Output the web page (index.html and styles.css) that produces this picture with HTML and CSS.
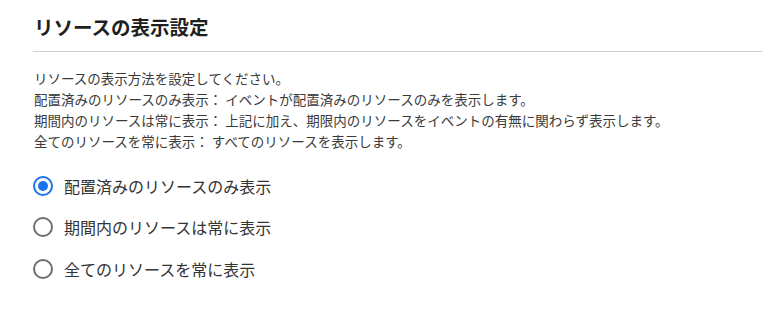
FILE: index.html
```html
<!DOCTYPE html>
<html lang="ja">
<head>
<meta charset="utf-8">
<link rel="stylesheet" href="styles.css">
</head>
<body>
<div class="panel">
  <h2 class="title">リソースの表示設定</h2>
  <div class="desc">
    <p>リソースの表示方法を設定してください。</p>
    <p>配置済みのリソースのみ表示： イベントが配置済みのリソースのみを表示します。</p>
    <p>期間内のリソースは常に表示： 上記に加え、期限内のリソースをイベントの有無に関わらず表示します。</p>
    <p>全てのリソースを常に表示： すべてのリソースを表示します。</p>
  </div>
  <div class="options">
    <label class="option"><input type="radio" name="mode" class="radio" checked><span>配置済みのリソースのみ表示</span></label>
    <label class="option"><input type="radio" name="mode" class="radio"><span>期間内のリソースは常に表示</span></label>
    <label class="option"><input type="radio" name="mode" class="radio"><span>全てのリソースを常に表示</span></label>
  </div>
</div>
</body>
</html>
```
FILE: styles.css
```css
html, body {
  margin: 0;
  padding: 0;
  background: #fff;
}
body {
  font-family: "Noto Sans CJK JP", "Noto Sans", sans-serif;
  color: #333;
}
.panel {
  padding: 12px 0 0 34px;
}
.title {
  margin: 0;
  font-size: 19.5px;
  font-weight: 700;
  line-height: 30px;
  color: #1f1f1f;
  padding-bottom: 9px;
  border-bottom: 1px solid #cfcfcf;
  margin-left: -1px;
  padding-left: 1px;
}
.desc {
  margin-top: 16px;
  font-size: 13.5px;
  line-height: 21px;
  color: #3a3a3a;
}
.desc p {
  margin: 0;
}
.options {
  margin-top: 13px;
  display: flex;
  flex-direction: column;
}
.option {
  display: flex;
  align-items: center;
  height: 41.5px;
  font-size: 16px;
  color: #333;
}
.radio {
  appearance: none;
  -webkit-appearance: none;
  margin: 0 11px 0 -1px;
  width: 20px;
  height: 20px;
  border: 2px solid #6e6e6e;
  border-radius: 50%;
  box-sizing: border-box;
  display: grid;
  place-items: center;
  flex: none;
}
.radio:checked {
  border-color: #1a73e8;
}
.radio:checked::after {
  content: "";
  width: 10px;
  height: 10px;
  border-radius: 50%;
  background: #1a73e8;
}
```
